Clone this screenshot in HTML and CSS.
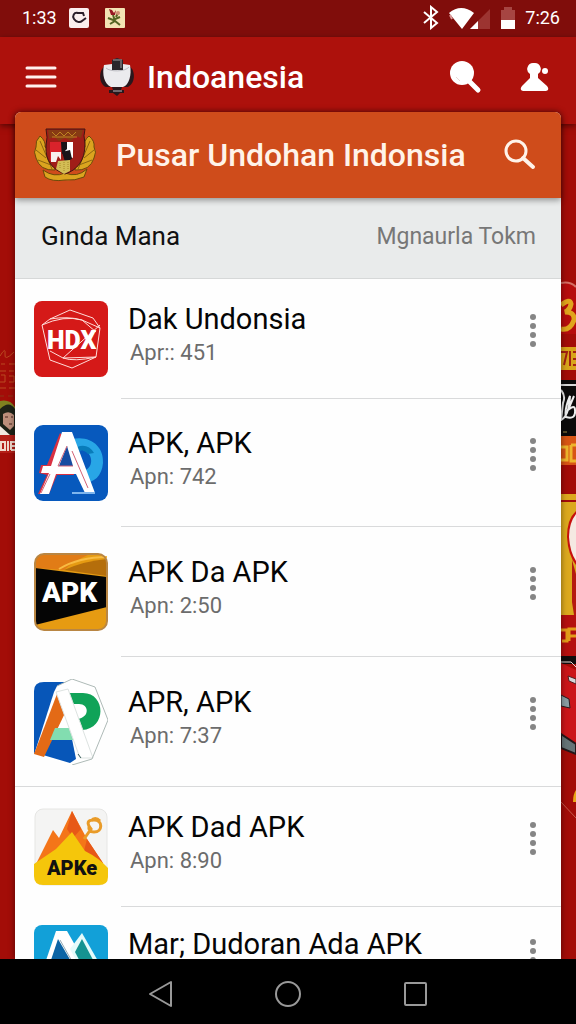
FILE: index.html
```html
<!DOCTYPE html>
<html lang="id">
<head>
  <meta charset="UTF-8" />
  <meta name="viewport" content="width=device-width, initial-scale=1" />
  <title>Indoanesia</title>
  <link rel="stylesheet" href="styles.css">
</head>
<body>
  <div class="statusbar">
    <span class="time">1:33</span>
    <svg class="notif" width="20" height="20" viewBox="0 0 20 20">
      <rect width="20" height="20" rx="2" fill="#fbeeee" />
      <path d="M9 5C5 4 3 8 5 11C7 14 11 15 13 13L17 10" fill="none" stroke="#2a1d28" stroke-width="2" />
      <path d="M8 5H14L15 8" fill="none" stroke="#2a1d28" stroke-width="2" />
    </svg>
    <svg class="notif" width="20" height="20" viewBox="0 0 20 20">
      <rect width="20" height="20" rx="1" fill="#f3e3b4" />
      <path d="M4 1L7 2L9 5L11 2L10 7L6 7Z" fill="#971622" />
      <path d="M8 7L10 13M3 10L8 12L15 9M5 16L10 13L15 17M13 5L11 9" stroke="#536423" stroke-width="2" fill="none" />
      <circle cx="13" cy="5" r="2" fill="#cf8d72" />
    </svg>
    <div class="status-right">
      <svg width="16" height="25" viewBox="0 0 16 25">
        <path d="M1 7L14 18L8 23V2L14 7L1 18" fill="none" stroke="#fff" stroke-width="2" />
      </svg>
      <svg width="43" height="24" viewBox="0 0 43 24">
        <path d="M1 7Q13 -3 26 7L14 23Z" fill="#fff" />
        <path d="M2 9L4 13" stroke="#d99" stroke-width="2" />
        <path d="M42 3V23H22Z" fill="#9c3431" />
        <path d="M30 15V23H22Z" fill="#fff" />
      </svg>
      <svg width="16" height="24" viewBox="0 0 16 24">
        <path d="M4 1H12V4H15V14H1V4H4Z" fill="#a64542" />
        <path d="M1 14H15V23H1Z" fill="#fff" />
      </svg>
      <span class="time">7:26</span>
    </div>
  </div>

  <header class="appbar">
    <button class="icon-btn" aria-label="Menu">
      <svg width="32" height="24" viewBox="0 0 32 24">
        <path d="M2 3H30M2 12H30M2 21H30" stroke="#fff0ee" stroke-width="3" stroke-linecap="round" />
      </svg>
    </button>
    <svg class="logo" width="36" height="38" viewBox="0 0 36 38">
      <path d="M8 7C-1 10 -1 26 7 29H29C37 25 37 10 28 7Z" fill="#29171c" />
      <path d="M13 29H23L22 32H25V35H21L18 38L14 35H10V32H14Z" fill="#29171c" />
      <path d="M14 33H23" stroke="#b8b8bd" />
      <path d="M5 7L13 6V12H24V6L31 7C33 17 30 27 24 29H12C5 26 3 16 5 7Z" fill="#ebebee" />
      <path d="M7 10C11 14 26 14 30 9" fill="none" stroke="#bcbcc2" />
      <path d="M13 2L18 0L24 2V12H13Z" fill="#29262b" />
      <path d="M14 2H23M22 3V10" stroke="#a2a0a4" />
    </svg>
    <h1 class="brand">Indoanesia</h1>
    <button class="icon-btn search-btn" aria-label="Cari">
      <svg width="34" height="34" viewBox="0 0 34 34">
        <circle cx="14" cy="13" r="12" fill="#fff" />
        <path d="M21 21L30 30" stroke="#fff" stroke-width="5" stroke-linecap="round" />
        <path d="M8 17L12 21" stroke="#ead8d5" />
      </svg>
    </button>
    <button class="icon-btn" aria-label="Akun">
      <svg width="30" height="30" viewBox="0 0 30 30">
        <path d="M14 1A6 6 0 0 0 10 12V16L2 24Q-1 28 3 29H26Q30 28 27 24L18 16V12A6 6 0 0 0 14 1Z" fill="#fff" />
        <circle cx="25" cy="9" r="3" fill="#fff" />
      </svg>
    </button>
  </header>

  <main class="content">
    <svg class="side" viewBox="0 0 15 835" preserveAspectRatio="xMinYMin slice">
      <g fill="none" stroke="#ba4a20">
        <path d="M0 232Q6 222 5 230T14 228M1 240H5M9 240H15M0 247H6M9 247H14M0 258H5V251H1M9 252H14V258H9M0 264H6M9 264H15" />
        <path d="M0 272H4M8 272H13" stroke="#8d3516" />
      </g>
      <path d="M0 277Q10 275 15 283V310H0Z" fill="#7f8120" />
      <path d="M0 285Q9 276 15 285V311H0Z" fill="#1d2217" />
      <path d="M3 290Q9 286 14 291V302L10 306L3 300Z" fill="#bc8f7b" />
      <path d="M5 293H8M11 293H13M9 300H12" stroke="#49251e" />
      <path d="M0 302L10 311H0Z" fill="#f1e8df" />
      <path d="M0 311H15V329H0Z" fill="#b42018" />
      <path d="M1 318H5V326H1ZM8 317V327M11 326V318H15M11 322H15M11 326H15" fill="none" stroke="#f0d8cb" stroke-width="2" />
    </svg>

    <section class="card">
      <div class="card-head">
        <svg width="62" height="56" viewBox="0 0 62 56">
          <g fill="#dba41f" stroke="#6b4a0a">
            <path d="M6 9Q12 14 11 20Q15 22 14 27Q18 29 18 34Q22 37 21 43Q6 44 2 31Q-1 25 2 20Q1 14 6 9Z" />
            <path d="M55 9Q49 14 51 20Q46 22 48 27Q43 29 44 34Q40 37 41 43Q56 44 60 31Q63 25 60 20Q61 14 55 9Z" />
            <path d="M9 43Q20 51 31 46Q43 51 53 42L50 50Q41 54 31 53Q18 55 11 50Z" />
          </g>
          <path d="M6 14L18 42M2 23L12 31M4 33L17 38M56 14L44 42M60 23L50 31M58 33L45 38" stroke="#8c6511" fill="none" />
          <path d="M12 2H51Q49 8 51 17C51 34 43 43 31 47C19 43 11 34 12 19Q14 10 12 2Z" fill="#a01d18" stroke="#3f1512" />
          <path d="M14 3H49L47 11L42 9L37 14L31 11L25 14L20 10L15 12Z" fill="#873a13" />
          <path d="M18 5L22 9L26 5L30 9L34 5L38 9L42 5M18 10H43" stroke="#bd8322" fill="none" />
          <path d="M16 15H27V27L21 28L19 34H16Z" fill="#d9232b" />
          <path d="M17 25H27V33L24 29L22 35H17Z" fill="#f8f1ef" />
          <path d="M27 15H33V25L28 27Z" fill="#181419" />
          <path d="M33 15H39V31L34 29L31 24L33 22Z" fill="#fff" />
          <path d="M28 25L36 23L38 32L31 35Z" fill="#181419" />
          <path d="M24 34L36 33V44L30 47L22 42Z" fill="#d3bd55" />
          <path d="M26 36V42M30 35V45M34 35V43" stroke="#a68929" stroke-dasharray="1 1" />
        </svg>
        <h2 class="card-title">Pusar Undohan Indonsia</h2>
        <button class="icon-btn" aria-label="Cari unduhan">
          <svg width="32" height="32" viewBox="0 0 32 32">
            <circle cx="12" cy="12" r="10" fill="none" stroke="#fff3e9" stroke-width="3" />
            <path d="M19 19L29 28" stroke="#fff3e9" stroke-width="4" stroke-linecap="round" />
          </svg>
        </button>
      </div>

      <div class="tabs">
        <a class="tab active" href="#">Gında Mana</a>
        <a class="tab" href="#">Mgnaurla Tokm</a>
      </div>

      <ul class="list">
        <li class="row short">
          <svg class="app-icon" viewBox="0 0 74 78">
            <rect y="1" width="74" height="76" rx="8" fill="#d51918" />
            <g fill="none" stroke="#ffdcd8">
              <path d="M16 19L36 10L59 18L66 28L62 57L38 68L16 60L8 25Z" />
              <path d="M8 25Q30 15 48 20L66 28M16 19Q34 16 48 20L62 32M62 57Q40 62 29 58L66 25M16 51L29 58L62 57" />
            </g>
            <text class="hdx" x="13" y="49">HDX</text>
          </svg>
          <div class="info"><h3>Dak Undonsia</h3><p>Apr:: 451</p></div>
          <button class="more" aria-label="Opsi"><i></i><i></i><i></i><i></i></button>
        </li>
        <li class="row">
          <svg class="app-icon" viewBox="0 0 74 78">
            <rect y="1" width="74" height="76" rx="9" fill="#0759bd" />
            <path d="M38 15C57 11 70 23 69 39C68 52 60 59 49 59V47C58 45 60 34 53 28Q49 24 42 28Z" fill="#28a6e6" />
            <path d="M43 23Q54 19 60 29L54 30Q47 23 43 29Z" fill="#087cba" />
            <path d="M26 9L13 41H7L5 49L13 51L4 70H15L23 51H40L36 20Z" fill="#d93142" />
            <path d="M28 8H38L61 69H51L42 50H22L15 70H6L15 49H7L9 42H17Z" fill="#fff" />
            <path d="M33 22L25 42H39Z" fill="#164ca2" />
            <path d="M38 27L54 64M33 22L24 42H39M16 50L7 69" stroke="#d36375" fill="none" />
            <path d="M38 69H61" stroke="#7eb5ed" stroke-width="2" />
          </svg>
          <div class="info"><h3>APK, APK</h3><p>Apn: 742</p></div>
          <button class="more" aria-label="Opsi"><i></i><i></i><i></i><i></i></button>
        </li>
        <li class="row tall">
          <svg class="app-icon" viewBox="0 0 74 78">
            <rect x="1" y="1" width="72" height="76" rx="9" fill="#e69b12" />
            <path d="M1 15V10Q1 1 10 1H56Q40 8 30 17Z" fill="#e17c16" />
            <path d="M30 17Q50 8 73 6V23Z" fill="#b56e0b" />
            <path d="M25 16Q45 4 73 4" stroke="#f8bb42" stroke-width="2" fill="none" />
            <path d="M1 15L73 24V54L1 72Z" fill="#050505" />
            <rect x="1" y="1" width="72" height="76" rx="9" fill="none" stroke="#b98643" stroke-width="2" />
            <text class="apk" x="8" y="49">APK</text>
          </svg>
          <div class="info"><h3>APK Da APK</h3><p>Apn: 2:50</p></div>
          <button class="more" aria-label="Opsi"><i></i><i></i><i></i><i></i></button>
        </li>
        <li class="row tall full-line">
          <svg class="app-icon big" viewBox="0 0 74 86">
            <path d="M10 3H38V82L0 75V12Q0 3 10 3Z" fill="#0756b8" />
            <path d="M23 7L38 0L61 8L74 41L58 80L38 86L0 76L20 13Z" fill="#fff" />
            <path d="M14 60H38L42 80L36 84L9 76Z" fill="#0756b8" />
            <path d="M23 15L31 34L10 78L0 75Z" fill="#e36a16" />
            <path d="M21 49H38L44 61H16Z" fill="#82ddb0" />
            <path d="M35 14H49C72 14 73 50 48 51L44 40C56 38 55 25 45 25H39Z" fill="#10a358" />
            <path d="M22 13L34 10L59 79L46 79Z" fill="#fff" stroke="#dde3e1" />
            <path d="M23 7L38 0L61 8L74 41L58 80L38 86" fill="none" stroke="#aebab7" />
            <path d="M44 75L47 79" stroke="#375c59" />
          </svg>
          <div class="info"><h3>APR, APK</h3><p>Apn: 7:37</p></div>
          <button class="more" aria-label="Opsi"><i></i><i></i><i></i><i></i></button>
        </li>
        <li class="row short">
          <svg class="app-icon" viewBox="0 0 74 78">
            <rect x="1" y="1" width="72" height="76" rx="8" fill="#f4f4f3" stroke="#e6e6e4" />
            <path d="M1 58L19 22L25 30L38 3L53 31L69 55L58 65H7Z" fill="#f47519" />
            <path d="M38 3L47 21L39 30L33 21ZM53 31L69 55L50 43Z" fill="#e75817" />
            <path d="M0 56L22 41L38 24L51 43Q65 50 74 60V69Q74 77 65 77H9Q0 77 0 68Z" fill="#f5c60b" />
            <path d="M50 31L57 21Q50 12 60 12C69 12 69 24 60 24Q54 24 55 18M57 13Q61 8 66 13" fill="none" stroke="#e99b28" stroke-width="3" />
            <text class="apke" x="13" y="67">APKe</text>
          </svg>
          <div class="info"><h3>APK Dad APK</h3><p>Apn: 8:90</p></div>
          <button class="more" aria-label="Opsi"><i></i><i></i><i></i><i></i></button>
        </li>
        <li class="row last">
          <svg class="app-icon" viewBox="0 0 74 78">
            <rect width="74" height="78" rx="8" fill="#12a0d8" />
            <path d="M7 50L22 6H33L58 50Z" fill="#fff" />
            <path d="M12 50L24 14L45 50Z" fill="#0b64a5" />
            <path d="M36 24L48 8L72 50H50Z" fill="#e5fbfb" />
            <path d="M41 27L48 14L67 50H53Z" fill="#159391" />
            <path d="M26 15L39 38" stroke="#92a9b6" />
          </svg>
          <div class="info"><h3>Mar; Dudoran Ada APK</h3></div>
          <button class="more" aria-label="Opsi"><i></i><i></i><i></i><i></i></button>
        </li>
      </ul>
    </section>

    <svg class="side" viewBox="0 0 15 835" preserveAspectRatio="xMinYMin slice">
      <path d="M0 159Q10 157 15 163V210H0Z" fill="#b60d0d" />
      <path d="M0 159Q9 157 15 163" fill="none" stroke="#d47065" stroke-width="2" />
      <path d="M0 181Q9 174 10 180Q9 186 4 188Q14 188 13 196Q9 207 0 205" fill="none" stroke="#e0a51d" stroke-width="5" />
      <path d="M0 223H15V246H0Z" fill="#d9a41a" />
      <path d="M0 228H6L3 241M9 227V242M12 228H15M12 235H15M12 241H15" fill="none" stroke="#a32110" stroke-width="2" />
      <path d="M0 256H15V312H0Z" fill="#0c0b0b" />
      <path d="M0 261H15" stroke="#d8d8d8" stroke-width="2" />
      <path d="M0 266Q5 272 2 279L0 296Q8 292 9 272Q3 286 5 293Q15 296 14 286Q14 280 7 286L13 272" fill="none" stroke="#eee" stroke-width="2" />
      <path d="M2 308H6" stroke="#a18b42" />
      <path d="M0 312H15V341H0Z" fill="#d85515" />
      <path d="M0 323H6V336H0M10 321V337H15M10 321H15" fill="none" stroke="#edb52d" stroke-width="3" />
      <path d="M0 370H15V376H0ZM0 378H15V518H0Z" fill="#dca91e" />
      <path d="M0 376H15V378H0Z" fill="#a30c0c" />
      <path d="M15 387Q6 395 6 413Q7 431 15 441Z" fill="#c7100d" />
      <path d="M15 390Q8 399 8 413Q9 428 15 437Z" fill="#f5e9e2" />
      <path d="M11 436L15 450V504L11 478Z" fill="#b51a10" />
      <path d="M0 491H15V532H0Z" fill="#b5100f" />
      <path d="M0 506H6V517H1M8 517V505H15M9 512H15" fill="none" stroke="#e39c19" stroke-width="3" />
      <path d="M0 532H15V540H0Z" fill="#110c0c" />
      <path d="M0 539L15 546V620L0 610Z" fill="#cb1519" />
      <path d="M0 538H10L15 543" fill="none" stroke="#e7d6d3" />
      <path d="M7 552L15 555V560L8 557Z" fill="#d4d7d9" stroke="#551e20" />
      <path d="M0 571L8 575L9 584L0 582Z" fill="#8b9da2" stroke="#281a1d" />
      <path d="M0 610L15 620V630L0 624Z" fill="#667477" stroke="#241719" stroke-width="2" />
      <path d="M15 666Q12 670 12 678H15Z" fill="#e9a718" />
      <path d="M0 678L15 694" stroke="#c65b4d" />
    </svg>
  </main>

  <nav class="navbar">
    <button class="icon-btn" aria-label="Kembali">
      <svg width="26" height="28" viewBox="0 0 26 28">
        <path d="M23 2V26L2 14Z" fill="none" stroke="#999" stroke-width="2" stroke-linejoin="round" />
      </svg>
    </button>
    <button class="icon-btn" aria-label="Beranda">
      <svg width="28" height="28" viewBox="0 0 28 28">
        <circle cx="14" cy="14" r="12" fill="none" stroke="#999" stroke-width="2" />
      </svg>
    </button>
    <button class="icon-btn" aria-label="Terbaru">
      <svg width="26" height="26" viewBox="0 0 26 26">
        <rect x="3" y="2" width="21" height="22" rx="1" fill="none" stroke="#999" stroke-width="2" />
      </svg>
    </button>
  </nav>
</body>
</html>
```

FILE: styles.css
```css
* {
  box-sizing: border-box;
}
body {
  margin: 0;
  height: 100vh;
  display: flex;
  flex-direction: column;
  overflow: hidden;
  background: #a30d08;
  font-family: Roboto, "Liberation Sans", sans-serif;
}
h1, h2, h3, p, ul {
  margin: 0;
  padding: 0;
  font-weight: 400;
}
svg {
  display: block;
  flex-shrink: 0;
}
button {
  border: none;
  background: none;
  padding: 0;
  cursor: pointer;
}
.icon-btn {
  flex-shrink: 0;
}

/* status bar */
.statusbar {
  height: 37px;
  flex-shrink: 0;
  display: flex;
  align-items: center;
  padding: 0 16px 2px 22px;
  background: #800d0b;
  color: #fff;
}
.time {
  font-size: 18px;
}
.notif {
  margin-left: 12px;
}
.notif + .notif {
  margin-left: 16px;
}
.status-right {
  margin-left: auto;
  display: flex;
  align-items: center;
  gap: 9px;
}

/* app bar */
.appbar {
  height: 87px;
  flex-shrink: 0;
  display: flex;
  align-items: center;
  padding: 0 26px 8px 25px;
  background: #ad110c;
  box-shadow: 0 2px 6px rgba(0, 0, 0, 0.5);
  color: #fff;
  z-index: 1;
}
.logo {
  margin-left: 42px;
}
.brand {
  flex: 1;
  margin-left: 12px;
  font-size: 32px;
  font-weight: 500;
}
.search-btn {
  margin-right: 38px;
}

.content {
  flex: 1;
  min-height: 0;
  display: flex;
}
.side {
  width: 15px;
  height: 100%;
}

/* card */
.card {
  flex: 1;
  min-width: 0;
  margin-top: -12px;
  display: flex;
  flex-direction: column;
  background: #fefefe;
  border-radius: 6px 6px 0 0;
  box-shadow: 0 0 6px rgba(0, 0, 0, 0.5);
  z-index: 2;
}
.card-head {
  height: 86px;
  flex-shrink: 0;
  display: flex;
  align-items: center;
  padding: 0 25px 0 19px;
  background: #cf4c1b;
  border-radius: 6px 6px 0 0;
  box-shadow: 0 2px 6px rgba(0, 0, 0, 0.4);
  z-index: 1;
}
.card-title {
  flex: 1;
  margin-left: 20px;
  font-size: 32px;
  font-weight: 500;
  color: #fff3e9;
  white-space: nowrap;
}
.tabs {
  height: 81px;
  flex-shrink: 0;
  display: flex;
  justify-content: space-between;
  align-items: center;
  padding: 0 25px 4px 26px;
  background: #e9ebeb;
  border-bottom: 1px solid #d6d8d8;
}
.tab {
  font-size: 23px;
  color: #777;
  text-decoration: none;
}
.tab.active {
  font-size: 26px;
  color: #111;
}

/* app list */
.list {
  flex: 1;
  min-height: 0;
  overflow: hidden;
  list-style: none;
}
.row {
  height: 128px;
  display: flex;
  align-items: center;
  padding: 0 25px 0 19px;
  background: linear-gradient(#d9dadb, #d9dadb) 106px 100% / 100% 1px no-repeat;
}
.row.short {
  height: 120px;
}
.row.tall {
  height: 130px;
}
.row.last {
  height: 114px;
}
.row.full-line {
  background-position: 0 100%;
}
.app-icon {
  width: 74px;
  height: 78px;
}
.app-icon.big {
  height: 86px;
}
.app-icon text {
  font-family: Roboto, sans-serif;
  font-weight: 900;
}
.hdx {
  font-size: 25px;
  fill: #fff;
}
.apk {
  font-size: 28px;
  fill: #fff;
}
.apke {
  font-size: 20px;
  fill: #111;
}
.info {
  flex: 1;
  min-width: 0;
  min-height: 74px;
  margin-left: 20px;
  padding-bottom: 4px;
  line-height: 34px;
}
.info h3 {
  font-size: 29px;
  color: #050505;
  white-space: nowrap;
}
.info p {
  padding-left: 2px;
  font-size: 22px;
  color: #6c6c6c;
}
.more {
  display: flex;
  flex-direction: column;
  gap: 3px;
  margin-bottom: 18px;
}
.more i {
  width: 6px;
  height: 6px;
  border-radius: 50%;
  background: #858585;
}

/* system navigation */
.navbar {
  height: 65px;
  flex-shrink: 0;
  display: flex;
  justify-content: center;
  align-items: center;
  gap: 100px;
  padding-top: 4px;
  background: #000;
  z-index: 3;
}
```
